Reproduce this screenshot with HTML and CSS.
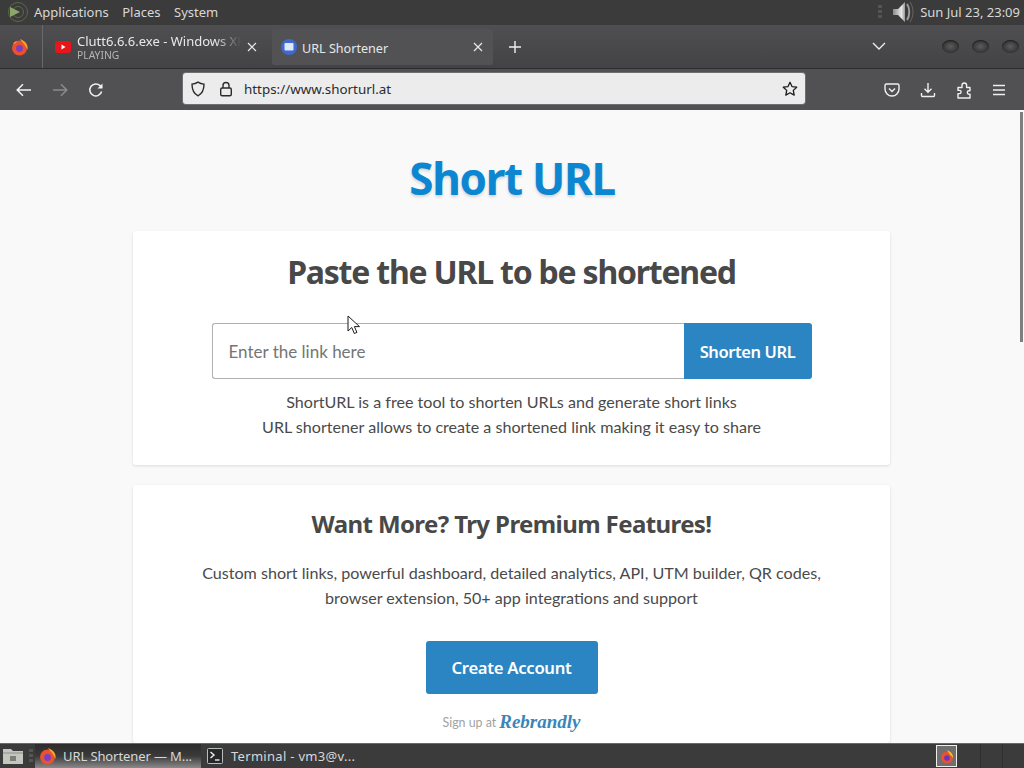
FILE: index.html
```html
<!DOCTYPE html>
<html lang="en">
<head>
<meta charset="utf-8">
<title>URL Shortener</title>
<link rel="stylesheet" href="styles.css">
</head>
<body>
<div class="screen">
  <header class="sysbar">
    <div class="sys-left">
      <svg class="sys-logo" width="28" height="24" viewBox="0 0 28 24"><circle cx="16" cy="12" r="9.500" fill="none" stroke="#5c6a48" stroke-width="1"/><circle cx="16" cy="12" r="5.500" fill="none" stroke="#5c6a48" stroke-width="1"/><path d="M8 7 L18 12 L8 17Z" fill="#8ba56a"/></svg>
      <span>Applications</span><span>Places</span><span>System</span>
    </div>
    <div class="sys-right">
      <i class="grip"></i>
      <svg width="26" height="24" viewBox="0 0 26 24"><defs><linearGradient id="spk" x1="0" x2="1"><stop offset="0" stop-color="#8a8a8a"/><stop offset=".7" stop-color="#e8e8e8"/><stop offset="1" stop-color="#9a9a9a"/></linearGradient></defs><path d="M3 9h5l7-7v20l-7-7H3z" fill="url(#spk)"/><path d="M17 4c3 4 3 12 0 16" fill="none" stroke="#9d9d9d" stroke-width="2"/><path d="M20 2c4 6 4 14 0 20" fill="none" stroke="#666" stroke-width="1"/></svg>
      <span>Sun Jul 23, 23:09</span>
    </div>
  </header>

  <div class="tabbar">
    <div class="tab-fx">
      <svg width="18" height="18" viewBox="0 0 18 18"><circle cx="8.500" cy="10" r="7.500" fill="#e8522f"/><path d="M9 1c5 2 8.500 5 7.500 11-2-5-4-6-7.500-11z" fill="#f9a22a"/><path d="M2 6c1-2 3-3 4-3-1 2-2 3-4 3z" fill="#f9a22a"/><circle cx="8.500" cy="10.500" r="3.400" fill="#7a3fc4"/></svg>
    </div>
    <div class="tab tab-audio">
      <svg width="16" height="12" viewBox="0 0 16 12"><rect width="16" height="12" rx="3" fill="#e8161a"/><path d="M6.500 3.500l4 2.500-4 2.500z" fill="#fff"/></svg>
      <div class="tab-text"><span class="tab-title">Clutt6.6.6.exe - Windows XP</span><span class="tab-sub">PLAYING</span></div>
      <svg width="10" height="10" viewBox="0 0 10 10"><path d="M1 1l8 8M9 1l-8 8" stroke="#e8e8e8" stroke-width="1.200"/></svg>
    </div>
    <div class="tab tab-active">
      <svg width="16" height="16" viewBox="0 0 16 16"><circle cx="8" cy="8" r="8" fill="#3f69cf"/><rect x="3.500" y="4" width="9" height="7.500" rx="1" fill="#dfe8fa"/></svg>
      <span class="tab-name">URL Shortener</span>
      <svg class="tab-x" width="10" height="10" viewBox="0 0 10 10"><path d="M1 1l8 8M9 1l-8 8" stroke="#e8e8e8" stroke-width="1.200"/></svg>
    </div>
    <svg class="tab-plus" width="12" height="12" viewBox="0 0 12 12"><path d="M6 0v12M0 6h12" stroke="#f0f0f0" stroke-width="1.400"/></svg>
    <div class="tab-end">
      <svg class="tab-chev" width="14" height="8" viewBox="0 0 14 8"><path d="M1 1l6 6 6-6" fill="none" stroke="#eee" stroke-width="1.400"/></svg>
      <div class="winbtns"><i></i><i></i><i></i></div>
    </div>
  </div>

  <nav class="navbar">
    <div class="nav-btns">
      <svg width="16" height="14" viewBox="0 0 16 14"><path d="M15 7H1.500M7 1.200L1.200 7 7 12.800" fill="none" stroke="#f2f2f2" stroke-width="1.500"/></svg>
      <svg width="16" height="14" viewBox="0 0 16 14"><path d="M1 7h13.500M9 1.200L14.800 7 9 12.800" fill="none" stroke="#8b8b8c" stroke-width="1.500"/></svg>
      <svg width="16" height="16" viewBox="0 0 16 16"><path d="M13.600 9.500A6 6 0 1 1 12 3.600L14 5.500" fill="none" stroke="#f2f2f2" stroke-width="1.500"/><path d="M14.500 1.500v5h-5z" fill="#f2f2f2"/></svg>
    </div>
    <div class="urlbar">
      <svg class="url-shield" width="16" height="16" viewBox="0 0 16 16"><path d="M8 1.200c2 1.300 4 1.800 6 1.900 0 6-1.800 9.800-6 11.700C3.800 12.900 2 9.100 2 3.100c2-.1 4-.6 6-1.900z" fill="none" stroke="#2b2b2b" stroke-width="1.400"/></svg>
      <svg class="url-lock" width="14" height="16" viewBox="0 0 14 16"><rect x="1.700" y="7" width="10.600" height="7.800" rx="1.500" fill="none" stroke="#2b2b2b" stroke-width="1.400"/><path d="M4 7V4.500a3 3 0 0 1 6 0V7" fill="none" stroke="#2b2b2b" stroke-width="1.400"/></svg>
      <span class="url-text">https://www.shorturl.at</span>
      <svg class="url-star" width="16" height="16" viewBox="0 0 16 16"><path d="M8 1.300l2 4.300 4.700.6-3.400 3.200.9 4.700L8 11.800l-4.200 2.300.9-4.700L1.300 6.200 6 5.600z" fill="none" stroke="#1c1c1c" stroke-width="1.300" stroke-linejoin="round"/></svg>
    </div>
    <div class="nav-tools">
      <svg width="16" height="16" viewBox="0 0 16 16"><path d="M2.500 2h11A1.500 1.500 0 0 1 15 3.500V7A7 7 0 0 1 1 7V3.500A1.500 1.500 0 0 1 2.500 2z" fill="none" stroke="#f0f0f0" stroke-width="1.400"/><path d="M5 6.500l3 3 3-3" fill="none" stroke="#f0f0f0" stroke-width="1.400"/></svg>
      <svg width="16" height="16" viewBox="0 0 16 16"><path d="M8 1v9M4.500 6.800L8 10.300l3.500-3.500M1.500 11v2.500a1 1 0 0 0 1 1h11a1 1 0 0 0 1-1V11" fill="none" stroke="#f0f0f0" stroke-width="1.400"/></svg>
      <svg width="16" height="18" viewBox="0 0 16 18"><path d="M2 6.500h4V4.300a2.300 2.300 0 0 1 4.600 0v2.200h3.400v3.300h-1a1.700 1.700 0 0 0 0 3.400h1v3.800H2v-4.400h1.500a1.600 1.600 0 0 0 0-3.200H2z" fill="none" stroke="#f0f0f0" stroke-width="1.400" stroke-linejoin="round"/></svg>
      <svg width="14" height="12" viewBox="0 0 14 12"><path d="M1 1.500h12M1 6h12M1 10.500h12" stroke="#f0f0f0" stroke-width="1.400"/></svg>
    </div>
  </nav>

  <div class="viewport">
    <main class="page">
      <h1 class="brand">Short URL</h1>
      <section class="card card-main">
        <h2 class="card-title">Paste the URL to be shortened</h2>
        <form class="shorten">
          <div class="field">Enter the link here</div>
          <div class="submit">Shorten URL</div>
        </form>
        <p class="copy">ShortURL is a free tool to shorten URLs and generate short links<br>URL shortener allows to create a shortened link making it easy to share</p>
      </section>
      <section class="card card-premium">
        <h3 class="premium-title">Want More? Try Premium Features!</h3>
        <p class="copy premium-copy">Custom short links, powerful dashboard, detailed analytics, API, UTM builder, QR codes,<br>browser extension, 50+ app integrations and support</p>
        <div class="cta">Create Account</div>
        <p class="signup">Sign up at <em class="rebrandly">Rebrandly</em></p>
      </section>
    </main>
    <div class="scrollbar"><div class="thumb"></div></div>
    <svg class="cursor" width="14" height="20" viewBox="0 0 14 20"><path d="M1 1v15l3.800-3.500 2.500 6 2.600-1.100-2.500-5.800H12.500z" fill="#fff" stroke="#1a1a1a" stroke-width="1"/></svg>
  </div>

  <footer class="taskbar">
    <svg class="task-files" width="22" height="20" viewBox="0 0 22 20"><path d="M1 3h8l2 2h10v13H1z" fill="#c4c7bf"/><path d="M1 7h20" stroke="#8b8e87"/><rect x="8" y="10" width="6" height="5" fill="#7c7f78"/></svg>
    <i class="grip task-grip"></i>
    <div class="task task-active">
      <svg width="18" height="18" viewBox="0 0 18 18"><circle cx="8.500" cy="10" r="7.500" fill="#e8522f"/><path d="M9 1c5 2 8.500 5 7.500 11-2-5-4-6-7.500-11z" fill="#f9a22a"/><circle cx="8.500" cy="10.500" r="3.400" fill="#7a3fc4"/></svg>
      <span>URL Shortener — M...</span>
    </div>
    <div class="task task-term">
      <svg width="16" height="16" viewBox="0 0 16 16"><rect x=".5" y=".5" width="15" height="15" rx="1" fill="#26282a" stroke="#b8bcbd"/><path d="M3.500 4l3.500 3-3.500 3" fill="none" stroke="#f0f0f0" stroke-width="1.400"/><path d="M8 12h4.500" stroke="#f0f0f0" stroke-width="1.400"/></svg>
      <span>Terminal - vm3@v...</span>
    </div>
    <div class="tray">
      <div class="tray-icon"><svg width="14" height="18" viewBox="0 0 14 18"><circle cx="7" cy="10.500" r="6" fill="#e8522f"/><path d="M7 3c4 2 6 4 6 8-2-3-4-4-6-8z" fill="#f9c02a"/><circle cx="7" cy="11" r="2.800" fill="#6a35c4"/></svg></div>
      <i class="tray-gap"></i><i class="tray-gap"></i>
    </div>
  </footer>
</div>
</body>
</html>
```
FILE: styles.css
```css
* { box-sizing: border-box; }
html, body { margin: 0; padding: 0; height: 100%; overflow: hidden; }
body { font-family: "Noto Sans", "Liberation Sans", sans-serif; color: #444; }
svg { display: block; flex: none; }
.screen { width: 1024px; height: 768px; display: flex; flex-direction: column; background: #fff; }

.sysbar { height: 25px; flex: none; background: #3b3b3b; color: #d8d8d8; font-size: 13px; display: flex; justify-content: space-between; align-items: center; padding: 0 4px 1px 4px; }
.sys-left, .sys-right { display: flex; align-items: center; }
.sys-left span { margin-right: 13.500px; }
.sys-left .sys-logo { margin-left: -2px; margin-right: 4px; }
.sys-right { gap: 4px; }
.grip { width: 4px; height: 14px; flex: none; background: repeating-linear-gradient(#555 0 3px, transparent 3px 5px); }
.sys-right .grip { margin-right: 4px; }

.tabbar { height: 44px; flex: none; background: linear-gradient(#4f4f52, #434346); border-bottom: 1px solid #2c2c2e; display: flex; align-items: center; color: #e8e8e8; font-size: 13px; }
.tab-fx { width: 43px; height: 100%; display: flex; align-items: center; justify-content: center; border-right: 1px solid #6a6a6d; padding-right: 3px; }
.tab { height: 36px; display: flex; align-items: center; padding: 0 10px; }
.tab-audio { width: 229px; padding-left: 12px; gap: 6px; }
.tab-text { display: flex; flex-direction: column; width: 164px; overflow: hidden; white-space: nowrap; line-height: 14px; padding-top: 3px; -webkit-mask-image: linear-gradient(90deg, #000 84%, transparent); mask-image: linear-gradient(90deg, #000 84%, transparent); }
.tab-title { font-size: 13px; }
.tab-sub { font-size: 10.300px; color: #b5b5b5; }
.tab-active { width: 221px; background: #525255; border-radius: 2px; padding-left: 9px; gap: 5px; }
.tab-active .tab-x { margin-left: auto; }
.tab-name { font-size: 12.600px; padding-top: 3px; }
.tab-plus { margin-left: 16px; }
.tab-end { margin-left: auto; display: flex; align-items: center; padding-right: 5px; }
.tab-chev { margin-right: 56px; margin-top: -2px; }
.winbtns { display: flex; gap: 13px; }
.winbtns i { width: 17px; height: 13px; border-radius: 50%; background: radial-gradient(#5c5c5c, #333 70%); box-shadow: inset 0 1px 1px #222; }

.navbar { height: 41px; flex: none; background: #515154; display: flex; align-items: center; }
.nav-btns { width: 183px; display: flex; align-items: center; gap: 20px; padding-left: 16px; }
.urlbar { width: 622px; height: 31px; margin-bottom: 2px; background: #ececec; border-radius: 3px; display: flex; align-items: center; padding: 0 7px; box-shadow: 0 0 0 1px #6f6f72; font-size: 13.400px; color: #2b2b2b; }
.url-lock { margin-left: 13px; }
.url-text { margin-left: 11px; }
.url-star { margin-left: auto; }
.nav-tools { flex: 1; display: flex; align-items: center; gap: 20px; padding-left: 79px; }

.viewport { flex: 1; min-height: 0; display: flex; position: relative; background: #f9f9f9; overflow: hidden; }
.page { flex: 1; min-width: 0; display: flex; flex-direction: column; align-items: center; }
.brand { margin: 38px 0 0 6px; height: 83px; font-size: 44px; line-height: 60px; font-weight: 700; color: #0d86d2; letter-spacing: -1.300px; text-shadow: 0 2px 3px rgba(0,0,0,.15); }
.card { width: 757px; background: #fff; border-radius: 3px; box-shadow: 0 1px 3px rgba(0,0,0,.12); display: flex; flex-direction: column; align-items: center; margin-left: 5px; }
.card-main { height: 234px; padding-top: 18px; }
.card-premium { margin-top: 20px; flex: 1; padding-top: 22px; }
.card-title { margin: 0; font-size: 32px; line-height: 46px; font-weight: 700; color: #484848; letter-spacing: -1.220px; }
.shorten { display: flex; width: 600px; height: 56px; margin-top: 28px; }
.field { flex: 1; border: 1px solid #b0b0b0; border-right: 0; border-radius: 3px 0 0 3px; padding-left: 16px; display: flex; align-items: center; font-family: Lato, "Noto Sans", sans-serif; font-size: 17px; color: #757575; }
.submit { width: 128px; background: #2b85c2; color: #fff; border-radius: 0 3px 3px 0; display: flex; align-items: center; justify-content: center; font-size: 16.500px; font-weight: 600; letter-spacing: -.4px; }
.copy { margin: 10px 0 0; font-family: Lato, "Noto Sans", sans-serif; font-size: 16.100px; line-height: 25px; color: #4a4a4a; text-align: center; }
.premium-title { margin: 0; font-size: 24px; line-height: 34px; font-weight: 700; color: #484848; letter-spacing: -.6px; }
.premium-copy { margin-top: 19px; }
.cta { margin-top: 31px; width: 172px; height: 53px; background: #2b85c2; color: #fff; border-radius: 3px; display: flex; align-items: center; justify-content: center; font-size: 16.700px; font-weight: 600; letter-spacing: -.3px; }
.signup { margin: 17px 0 0; font-family: Lato, "Noto Sans", sans-serif; font-size: 12.400px; color: #a2a2a2; display: flex; align-items: center; gap: 3px; }
.rebrandly { font-family: "Liberation Serif", serif; font-size: 19px; font-weight: 700; font-style: italic; color: #3a86b8; }
.scrollbar { width: 6px; flex: none; padding-top: 2px; }
.thumb { width: 3px; height: 230px; background: #7f7f7f; margin-left: 2px; }
.cursor { position: absolute; left: 347px; top: 205px; }

.taskbar { height: 25px; flex: none; background: #3b3b3b; border-top: 1px solid #6a6a6a; display: flex; align-items: center; color: #d8d8d8; font-size: 13px; }
.task-files { margin-left: 2px; margin-right: 5px; }
.task-grip { margin-right: 2px; }
.task { height: 100%; display: flex; align-items: center; gap: 6px; padding-left: 4px; white-space: nowrap; }
.task-active { width: 166px; background: linear-gradient(#2c2c2c, #3a3a3a 50%, #8a8a8a); letter-spacing: -.1px; }
.task-term { padding-left: 6px; gap: 8px; letter-spacing: .3px; }
.tray { margin-left: auto; display: flex; align-items: center; height: 100%; }
.tray-icon { width: 21px; height: 22px; background: #6f6f6f; border: 1px solid #eee; display: flex; align-items: center; justify-content: center; margin-right: 23px; }
.tray-gap { width: 22px; height: 100%; border-left: 1px solid #2f2f2f; }
```
